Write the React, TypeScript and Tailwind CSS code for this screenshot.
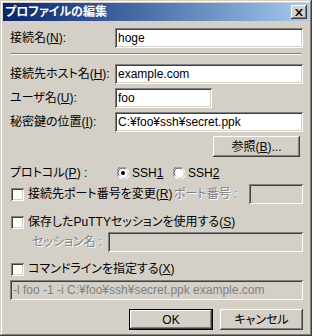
import React from 'react';

const sunken =
  'shadow-[inset_1px_1px_#808080,inset_-1px_-1px_#ffffff,inset_2px_2px_#404040,inset_-2px_-2px_#d4d0c8]';
const raised =
  'shadow-[inset_-1px_-1px_#404040,inset_1px_1px_#ffffff,inset_-2px_-2px_#808080,inset_2px_2px_#d4d0c8]';

function Field({ value, className = '', disabled = false }: { value?: string; className?: string; disabled?: boolean }) {
  return (
    <div
      className={`h-[20px] ${sunken} ${disabled ? 'bg-[#d4d0c8] text-[#808080]' : 'bg-white text-black'} flex items-center px-[3px] whitespace-nowrap overflow-hidden ${className}`}
    >
      {value}
    </div>
  );
}

function Checkbox() {
  return <div className={`w-[13px] h-[13px] bg-white shrink-0 ${sunken}`} />;
}

function Radio({ checked }: { checked?: boolean }) {
  return (
    <svg width="12" height="12" viewBox="0 0 12 12" className="shrink-0">
      <circle cx="6" cy="6" r="5.5" fill="#fff" />
      <path d="M1.2 9.4 A5.5 5.5 0 0 1 9.4 1.2" stroke="#808080" strokeWidth="1" fill="none" />
      <path d="M2.3 8.6 A4.3 4.3 0 0 1 8.6 2.3" stroke="#404040" strokeWidth="1" fill="none" />
      <path d="M10.8 2.6 A5.5 5.5 0 0 1 2.6 10.8" stroke="#ffffff" strokeWidth="1" fill="none" />
      <path d="M9.7 3.4 A4.3 4.3 0 0 1 3.4 9.7" stroke="#d4d0c8" strokeWidth="1" fill="none" />
      {checked && <circle cx="6" cy="6" r="2" fill="#000" />}
    </svg>
  );
}

function Gray({ children }: { children: React.ReactNode }) {
  return <span className="text-[#808080] [text-shadow:1px_1px_0_#ffffff]">{children}</span>;
}

export default function App() {
  return (
    <div className="w-[312px] h-[336px] bg-[#d4d0c8] p-[3px] flex flex-col shadow-[inset_-1px_-1px_#404040,inset_1px_1px_#d4d0c8,inset_-2px_-2px_#808080,inset_2px_2px_#ffffff] font-['Liberation_Sans','Noto_Sans_CJK_JP',sans-serif] text-[12px] leading-[14px] text-black [font-feature-settings:'palt'] overflow-hidden">
      {/* Title bar */}
      <div className="h-[18px] bg-linear-to-r from-[#0a246a] to-[#a6caf0] flex items-center justify-between pl-[2px] pr-[2px]">
        <span className="text-white font-bold text-[12px]">プロファイルの編集</span>
        <div className={`w-[16px] h-[14px] bg-[#d4d0c8] ${raised} flex items-center justify-center`}>
          <svg width="8" height="7" viewBox="0 0 8 7">
            <path d="M0 0h2l2 2.5L6 0h2L5 3.5 8 7H6L4 4.5 2 7H0l3-3.5z" fill="#000" />
          </svg>
        </div>
      </div>

      <div className="flex flex-col pl-[7px] pr-[6px]">
        {/* Connection name */}
        <div className="mt-[7px] flex items-center">
          <span className="w-[105px]">
            接続名(<u>N</u>):
          </span>
          <Field value="hoge" className="flex-1" />
        </div>

        <div className="mt-[5px] mr-[1px] border-t border-t-[#808080] border-b border-b-white" />

        <div className="mt-[9px] flex items-center">
          <span className="w-[105px]">
            接続先ホスト名(<u>H</u>):
          </span>
          <Field value="example.com" className="flex-1" />
        </div>

        <div className="mt-[4px] flex items-center">
          <span className="w-[105px]">
            ユーザ名(<u>U</u>):
          </span>
          <Field value="foo" className="w-[97px]" />
        </div>

        <div className="mt-[4px] flex items-center">
          <span className="w-[105px]">
            秘密鍵の位置(<u>I</u>):
          </span>
          <Field value="C:¥foo¥ssh¥secret.ppk" className="flex-1" />
        </div>

        <div className="mt-[4px] flex justify-end pr-[3px]">
          <div className={`w-[87px] h-[21px] ${raised} flex items-center justify-center`}>
            参照(<u>B</u>)...
          </div>
        </div>

        {/* Protocol */}
        <div className="mt-[9px] h-[14px] flex items-center">
          <span className="w-[107px]">プロトコル(<u>P</u>) :</span>
          <Radio checked />
          <span className="ml-[3px] w-[41px]">
            SSH<u>1</u>
          </span>
          <Radio />
          <span className="ml-[3px]">
            SSH<u>2</u>
          </span>
        </div>

        {/* Port */}
        <div className="mt-[4px] h-[20px] flex items-center">
          <div className="ml-[1px]">
            <Checkbox />
          </div>
          <span className="ml-[4px] w-[146px]">
            接続先ポート番号を変更(<u>R</u>)
          </span>
          <Gray>ポート番号 :</Gray>
          <Field disabled className="ml-auto w-[54px]" />
        </div>

        {/* Session */}
        <div className="mt-[11px] h-[14px] flex items-center">
          <div className="ml-[1px]">
            <Checkbox />
          </div>
          <span className="ml-[4px]">
            保存したPuTTYセッションを使用する(<u>S</u>)
          </span>
        </div>

        <div className="mt-[3px] flex items-center">
          <span className="w-[98px] pl-[22px]">
            <Gray>セッション名 :</Gray>
          </span>
          <Field disabled className="flex-1" />
        </div>

        {/* Command line */}
        <div className="mt-[10px] h-[14px] flex items-center">
          <div className="ml-[1px]">
            <Checkbox />
          </div>
          <span className="ml-[4px]">
            コマンドラインを指定する(<u>X</u>)
          </span>
        </div>

        <Field disabled value="-l foo -1 -i C:¥foo¥ssh¥secret.ppk example.com" className="mt-[4px]" />

        {/* Buttons */}
        <div className="mt-[9px] flex justify-end gap-[7px]">
          <div className="w-[84px] h-[21px] border border-black">
            <div className={`w-full h-full ${raised} flex items-center justify-center`}>OK</div>
          </div>
          <div className={`w-[83px] h-[21px] ${raised} flex items-center justify-center`}>キャンセル</div>
        </div>
      </div>
    </div>
  );
}
